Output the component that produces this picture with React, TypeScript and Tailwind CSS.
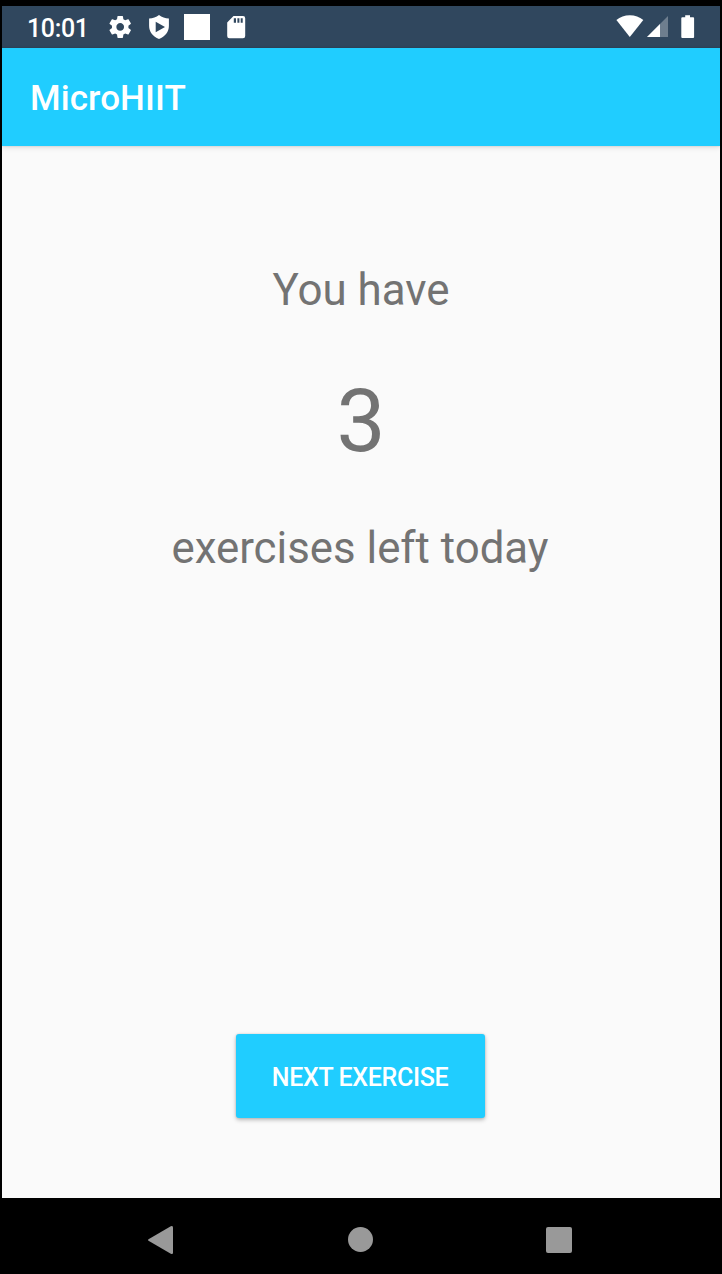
import React from "react";

function StatusBar() {
  return (
    <header className="flex h-[42px] shrink-0 items-center justify-between bg-[#30475e] pl-[25px] pr-[25px] text-white">
      <div className="flex h-full items-center">
        <span className="w-[81px] pt-[4px] text-[25px] leading-[42px] font-medium tracking-[-0.35px]">10:01</span>
        <svg className="h-[42px] w-[26px]" viewBox="108 6 26 42" fill="currentColor">
          <g transform="translate(107 13.7) scale(1.1)">
            <path d="M19.43 12.98c.04-.32.07-.64.07-.98s-.03-.66-.07-.98l2.11-1.65c.19-.15.24-.42.12-.64l-2-3.46c-.12-.22-.39-.3-.61-.22l-2.49 1c-.52-.4-1.08-.73-1.69-.98l-.38-2.65C14.46 2.18 14.25 2 14 2h-4c-.25 0-.46.18-.49.42l-.38 2.65c-.61.25-1.17.59-1.69.98l-2.49-1c-.23-.09-.49 0-.61.22l-2 3.46c-.13.22-.07.49.12.64l2.11 1.65c-.04.32-.07.65-.07.98s.03.66.07.98l-2.11 1.65c-.19.15-.24.42-.12.64l2 3.46c.12.22.39.3.61.22l2.49-1c.52.4 1.08.73 1.69.98l.38 2.65c.03.24.24.42.49.42h4c.25 0 .46-.18.49-.42l.38-2.65c.61-.25 1.17-.59 1.69-.98l2.49 1c.23.09.49 0 .61-.22l2-3.46c.12-.22.07-.49-.12-.64l-2.11-1.65zM12 15.5c-1.93 0-3.5-1.57-3.5-3.5s1.57-3.5 3.5-3.5 3.5 1.57 3.5 3.5-1.57 3.5-3.5 3.5z" />
          </g>
        </svg>
        <svg className="ml-[12px] h-[42px] w-[26px]" viewBox="146 6 26 42" fill="currentColor">
          <path
            fillRule="evenodd"
            d="M159 15C161.8 17.2 165.2 18.3 168.9 18.6V25.8C168.9 31.8 165.2 36.4 159 39C152.8 36.4 149.1 31.8 149.1 25.8V18.6C152.8 18.3 156.2 17.2 159 15ZM155.7 21.8V32.2L165 27Z"
          />
        </svg>
        <span className="ml-[12px] h-[26px] w-[26px] bg-white" />
        <svg className="ml-[13px] h-[42px] w-[26px]" viewBox="223 6 26 42" fill="currentColor">
          <path
            fillRule="evenodd"
            d="M233.5 16H243Q245.2 16 245.2 18.2V36Q245.2 38.2 243 38.2H229.4Q227.2 38.2 227.2 36V22.4ZM233.8 18.2V22.8H236V18.2ZM237.4 18.2V22.8H239.4V18.2ZM240.7 18.2V22.8H242.7V18.2Z"
          />
        </svg>
      </div>
      <svg className="h-[42px] w-[79px]" viewBox="616 6 79 42" fill="currentColor">
        <path d="M629.8 36.9L616.4 20Q622 15.3 629.8 15.3Q637.6 15.3 643.3 20Z" />
        <path d="M668 16V37H647Z" fillOpacity="0.3" />
        <path d="M660 24V37H647Z" />
        <path d="M685.2 15.2H690V17.2H693.1Q694.1 17.2 694.1 18.2V37Q694.1 38 693.1 38H682.3Q681.3 38 681.3 37V18.2Q681.3 17.2 682.3 17.2H685.2Z" />
      </svg>
    </header>
  );
}

function NavigationBar() {
  return (
    <nav className="flex h-[76px] shrink-0 items-center bg-black pt-[7px] text-[#999999]">
      <button aria-label="Back" className="ml-[145px] h-[30px] w-[28px]">
        <svg viewBox="147 1225 28 30" className="h-[30px] w-[28px]" fill="currentColor">
          <path d="M148.5 1239.3L170.8 1226.2Q173 1225.2 173 1227.4V1252.6Q173 1254.8 170.8 1253.8L148.5 1240.8Q147.4 1240 148.5 1239.3Z" />
        </svg>
      </button>
      <button aria-label="Home" className="ml-[173px] h-[25px] w-[25px] rounded-full bg-[#999999]" />
      <button aria-label="Recent apps" className="ml-[173px] h-[26px] w-[26px] rounded-[2px] bg-[#999999]" />
    </nav>
  );
}

export default function App() {
  return (
    <div className="flex h-[1274px] w-[722px] flex-col overflow-hidden bg-black px-[2px] pt-[6px] font-['Roboto',sans-serif]">
      <StatusBar />
      <div className="relative flex h-[97.5px] shrink-0 items-center bg-[#20cdff] pt-[5px] pl-[28px] shadow-[0_2px_5px_rgba(0,0,0,0.1),0_0_2px_rgba(0,0,0,0.15)]">
        <h1 className="text-[35px] leading-[42px] font-medium tracking-[0.1px] text-white">MicroHIIT</h1>
      </div>
      <main className="flex min-h-0 flex-1 flex-col items-center bg-[#fafafa] pt-[118.5px] pr-[2px] text-[#737373]">
        <p className="pl-[2px] text-[43.9px] leading-[52px]">You have</p>
        <p className="mt-[54px] pl-[2px] text-[87.4px] leading-[102px]">3</p>
        <p className="mt-[50px] text-[43.8px] leading-[52px]">exercises left today</p>
        <button className="mt-auto mb-[80px] flex h-[84.5px] w-[249px] items-center justify-center rounded-[3px] bg-[#20cdff] pt-[3px] text-[25px] font-medium tracking-[-0.35px] text-white shadow-[0_2px_4px_rgba(0,0,0,0.26),0_0_2px_rgba(0,0,0,0.15)]">
          NEXT EXERCISE
        </button>
      </main>
      <NavigationBar />
    </div>
  );
}
